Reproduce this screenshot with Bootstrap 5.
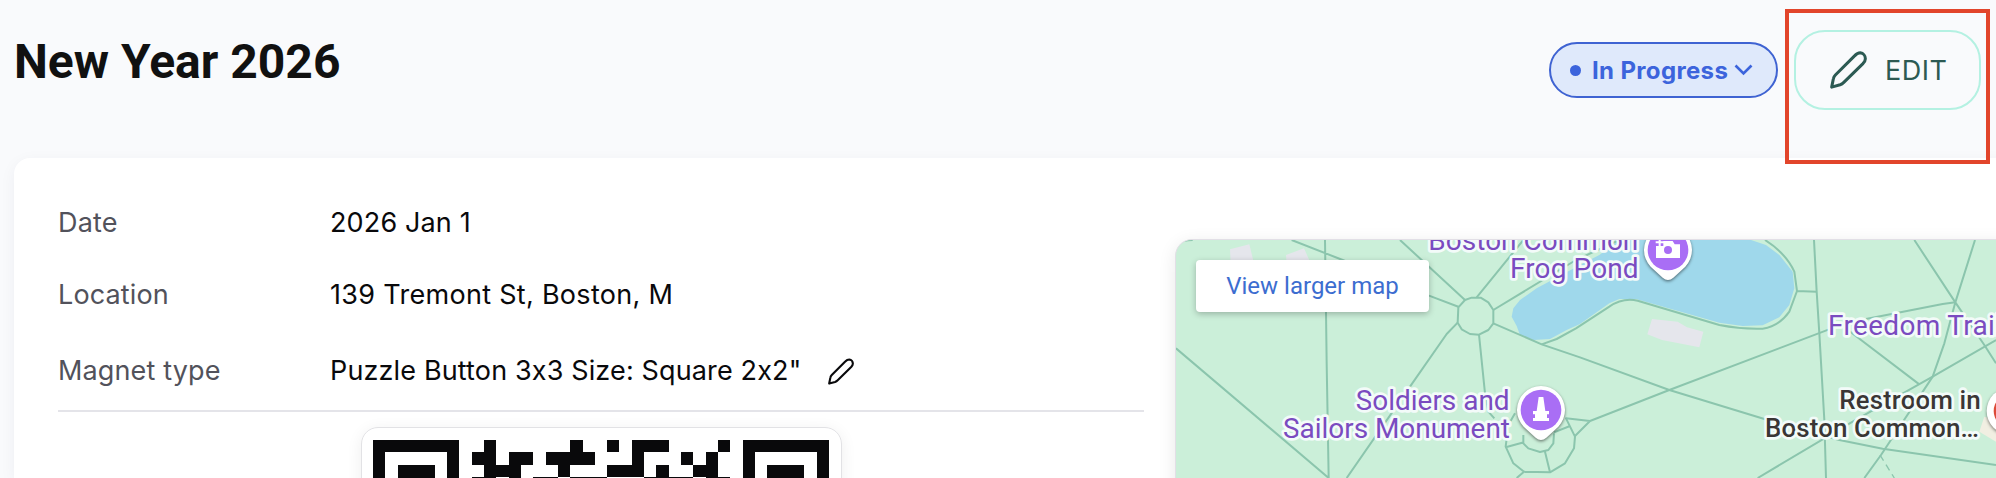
<!DOCTYPE html>
<html lang="en">
<head>
    <meta charset="UTF-8">
    <meta name="viewport" content="width=device-width, initial-scale=1.0">
    <title>New Year 2026</title>
    <link href="https://cdn.jsdelivr.net/npm/bootstrap@5.3.0/dist/css/bootstrap.min.css" rel="stylesheet">
    <style>
        body { background: #f9fafc; font-family: Inter, "Liberation Sans", sans-serif; font-feature-settings: "calt" 0; color: #09090b; }
        .page { height: 478px; padding-left: 14px; }
        .page-head { height: 158px; padding-right: 15px; }
        .page-title { font: 700 48px/56px Roboto, sans-serif; color: #111; margin-top: 34px; }
        .status-pill { width: 229px; height: 56px; margin-top: 42px; padding-left: 19px; border: 2px solid #3f63d2; border-radius: 28px; background: #dfe9fb; color: #3c64dc; font-size: 24px; font-weight: 700; }
        .status-dot { width: 11px; height: 11px; background: #3c64dc; margin-right: 11px; }
        .status-text { letter-spacing: .35px; padding-top: 1px; }
        .status-pill svg { margin-left: 6px; }
        .edit-wrap { margin: 30px 0 0 16px; }
        .edit-btn { width: 187px; height: 80px; padding: 0 0 0 34px; border: 2px solid #b4f1e2; border-radius: 31px; color: #2c5a53; font-size: 27px; letter-spacing: .5px; }
        .edit-btn svg { margin-right: 18px; }
        .edit-text { padding-top: 2px; }
        .highlight-box { left: -9px; top: -21px; width: 205px; height: 155px; border: 4px solid #e2452b; z-index: 2; pointer-events: none; }
        .details { width: 1996px; height: 320px; padding-left: 44px; background: #fff; border-radius: 16px 0 0 0; box-shadow: 0 4px 16px rgba(30, 40, 70, .05); }
        .info { width: 1086px; font-size: 27px; letter-spacing: .14px; }
        .info-row { height: 72px; }
        .info-row:last-child { padding-top: 8px; }
        .info-row svg { margin-left: 27px; }
        .info-label { width: 272px; color: #52525b; }
        .info-address { letter-spacing: .3px; }
        .info-list { height: 254px; padding-top: 29px; border-bottom: 2px solid #e4e4e9; }
        .qr-card { width: 481px; height: 482px; margin: 15px 0 0 303px; padding: 12px 11px; border: 1px solid #e2e2e5; border-radius: 17px; box-shadow: 0 3px 16px rgba(0, 0, 0, .07); }
        .map-box { width: 850px; height: 500px; margin: 81px 0 0 31px; border: 1px solid #e2dfe6; border-radius: 17px; background: #cbefd9; box-shadow: 0 4px 18px rgba(0, 0, 0, .09); }
        .map-link { left: 20px; top: 20px; width: 233px; height: 52px; border-radius: 4px; background: #fff; color: #3c6dd0; font: 400 24px/52px Roboto, sans-serif; box-shadow: 0 2px 6px rgba(0, 0, 0, .25); }
        .map-text { font-family: Roboto, sans-serif; font-size: 84px; fill: #7a4bc0; stroke: #f3fbf9; stroke-width: 16px; stroke-linejoin: round; paint-order: stroke; }
        .map-dark { font-size: 78px; font-weight: 500; fill: #3a3635; }
        .pin { filter: drop-shadow(0 4px 5px rgba(0, 0, 0, .5)); }
    </style>
</head>
<body>
<svg class="d-none">
    <symbol id="pencil" viewBox="0 0 110 112">
        <path d="M73 14Q81 5 90 5A17 17 0 0 1 105 23Q105 29 98 37L41 93Q36 98 30 100L5 107L10 82Q11 76 16 71Z" fill="none" stroke="currentColor" stroke-width="9" stroke-linejoin="round"/>
    </symbol>
</svg>

<div class="page overflow-hidden">
    <!-- Header -->
    <div class="page-head d-flex align-items-start">
        <h1 class="page-title mb-0 me-auto">New Year 2026</h1>
        <div class="status-pill d-flex align-items-center">
            <span class="status-dot rounded-circle"></span>
            <span class="status-text text-nowrap">In Progress</span>
            <svg width="19" height="12" viewBox="0 0 19 12"><path d="M1.5 1.5l8 8 8-8" fill="none" stroke="currentColor" stroke-width="2.6"/></svg>
        </div>
        <div class="edit-wrap position-relative">
            <button class="edit-btn btn d-flex align-items-center" type="button">
                <svg width="37" height="38"><use href="#pencil"/></svg>
                <span class="edit-text">EDIT</span>
            </button>
            <div class="highlight-box position-absolute"></div>
        </div>
    </div>

    <!-- Details -->
    <div class="details d-flex align-items-start">
        <div class="info flex-shrink-0">
            <div class="info-list">
                <div class="info-row d-flex align-items-center">
                    <div class="info-label">Date</div>
                    <div class="info-value">2026 Jan 1</div>
                </div>
                <div class="info-row d-flex align-items-center">
                    <div class="info-label">Location</div>
                    <div class="info-value info-address">139 Tremont St, Boston, M</div>
                </div>
                <div class="info-row d-flex align-items-center">
                    <div class="info-label">Magnet type</div>
                    <div class="info-value">Puzzle Button 3x3 Size: Square 2x2"</div>
                    <svg width="26" height="27"><use href="#pencil"/></svg>
                </div>
            </div>
            <div class="qr-card">
                <svg id="qr" class="d-block" width="456" height="456" viewBox="0 0 37 37" fill="#09090b" shape-rendering="crispEdges"></svg>
            </div>
        </div>

        <div class="map-box flex-shrink-0 position-relative overflow-hidden">
            <svg class="d-block" width="820" height="238" viewBox="0 0 2460 714">
                <!-- buildings -->
                <path fill="#e5e6ec" d="M162 28L220 13L234 70H164ZM330 45L384 25L402 65L332 70ZM1428 237L1505 245L1533 262L1582 275L1570 322L1458 300L1414 283Z"/>
                <path fill="#f1efe2" d="M2425 530L2410 575L2460 605V540Z"/>
                <!-- pond -->
                <path fill="#9fd8eb" d="M1007 230L1012 205L1032 180L1082 145L1212 75L1270 45L1330 0H1725L1770 15L1810 45L1850 95L1855 145L1840 195L1810 232L1760 256L1700 258L1630 248L1380 177H1330L1300 190L1212 252L1172 270L1122 297L1072 300L1032 285L1022 258Z"/>
                <!-- paths -->
                <g fill="none" stroke="#8bc5ad" stroke-width="6" stroke-linejoin="round">
                    <path d="M447 0L450 216L452 370L458 714M0 325L458 714M347 0L500 60L759 167L849 201M672 0L867 180M902 172L1042 0M952 210L1200 60L1330 0M0 10Q20 1 50 0"/>
                    <path d="M867 180L887 173H914L937 187L952 210V250L937 270L909 284L882 282L857 268L845 248L847 202Z"/>
                    <path d="M952 250L1097 313L1212 352L1480 450L1765 537L1990 600L2120 626L2460 675"/>
                    <path d="M1097 313L1142 297L1200 265L1300 200Q1340 172 1385 182L1630 255Q1695 268 1760 266Q1810 258 1840 215L1863 153L1855 95Q1830 40 1767 0M1863 153L1922 155"/>
                    <path d="M845 248L812 282L702 440L512 714M909 284L927 460L937 515L955 535"/>
                    <path d="M1017 520L997 555L989 620L1012 670L1044 695L1122 697L1167 670L1194 625L1197 590L1170 535L1242 543L1480 450L1965 266M1197 588L1242 543M1044 695L1022 714"/>
                    <path d="M1042 585V610L1057 625L1092 636L1117 630L1132 610L1134 580M989 622L1044 607M1107 635L1122 697M1134 577L1182 558"/>
                    <path d="M1914 0L1922 155L1930 280L1945 540L1950 714M2215 0L2338 187L2425 315L2460 370M2397 0L2338 187L2305 310L2270 410L2115 645L2065 714"/>
                    <path d="M2070 237L2300 192L2338 187M2000 258L2230 433M2460 300L2270 410L2030 545L1745 714"/>
                    <path d="M2112 645L2155 714" stroke-width="4" stroke-dasharray="20 14"/>
                </g>
                <!-- labels -->
                <g class="map-text">
                    <text x="757" y="30" textLength="630">Boston Common</text>
                    <text x="1002" y="113" textLength="386">Frog Pond</text>
                    <text x="539" y="509" textLength="462">Soldiers and</text>
                    <text x="321" y="593" textLength="681">Sailors Monument</text>
                    <text x="1956" y="285" textLength="522">Freedom Trail</text>
                    <g class="map-dark">
                        <text x="1990" y="508" textLength="424">Restroom in</text>
                        <text x="1767" y="591" textLength="642">Boston Common…</text>
                    </g>
                </g>
                <!-- pins -->
                <g transform="translate(1095 510)">
                    <path class="pin" d="M-52 50A72 72 0 1 1 52 50L16 83Q0 97-16 83Z" fill="#fff"/>
                    <circle r="61" fill="#a96ef5"/>
                    <path fill="#fff" d="M-7-39H7L13 3H24V13H18V24H24V33H-24V24H-18V13H-24V3H-13Z"/>
                </g>
                <g transform="translate(1476 30)">
                    <path class="pin" d="M-52 50A72 72 0 1 1 52 50L16 83Q0 97-16 83Z" fill="#fff"/>
                    <circle r="61" fill="#a96ef5"/>
                    <path fill="#fff" d="M-36-12H-14V-27H14L20-17H36V24H-36ZM-37-26H-28V-35H-22V-26H-13V-20H-22V-12H-28V-20H-37Z"/>
                    <circle r="12" fill="#a96ef5"/>
                </g>
                <g transform="translate(2503 513)">
                    <circle class="pin" r="71" fill="#fff"/>
                    <circle r="50" fill="#dc4a38"/>
                </g>
            </svg>
            <a class="map-link position-absolute text-center text-decoration-none" href="#"><span>View larger map</span></a>
        </div>
    </div>
</div>

<script src="https://cdn.jsdelivr.net/npm/bootstrap@5.3.0/dist/js/bootstrap.bundle.min.js"></script>
<script>
    // QR rows, one character per module
    const rows = [
        '#######..#......#..#.###....#.#######',
        '#.....#.##.##.####...#...#.#..#.....#',
        '#.###.#..###...#...###.#..##..#.###.#',
        '#.###.#.##.#.##.###...####.##.#.###.#'
    ];
    let d = '';
    rows.forEach((row, y) => {
        for (const run of row.matchAll(/#+/g)) {
            d += `M${run.index} ${y}h${run[0].length}v1h-${run[0].length}z`;
        }
    });
    document.getElementById('qr').innerHTML = `<path d="${d}"/>`;
</script>
</body>
</html>
